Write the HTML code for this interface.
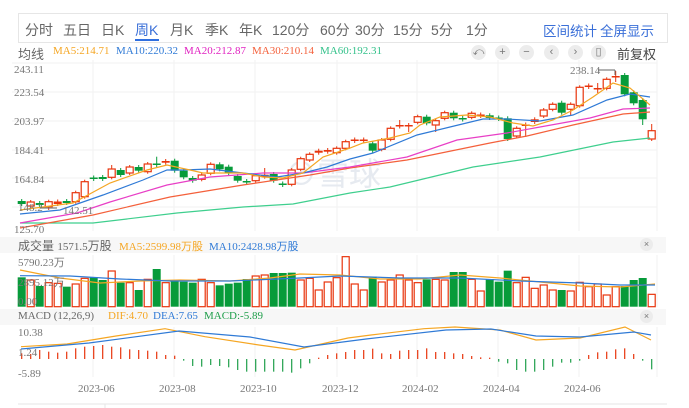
<!DOCTYPE html><html><head><meta charset="utf-8"><style>
body{margin:0;background:#fff;width:689px;height:408px;overflow:hidden;font-family:"Liberation Sans","Noto Sans CJK SC",sans-serif;position:relative}
.a{position:absolute;white-space:nowrap}
.tab{position:absolute;top:20px;font-size:14px;color:#666}
.s{font-family:"Liberation Serif","Noto Sans CJK SC",serif}
.ic{position:absolute;top:45px;width:15px;height:15px;border-radius:50%;background:#ececec;color:#777;font-size:11px;text-align:center;line-height:15px}
</style></head><body>
<div class="a" style="left:18px;top:13px;width:648px;height:28px;border:1px solid #e6e6e6"></div>
<div class="tab" style="left:25px">分时</div><div class="tab" style="left:63px">五日</div><div class="tab" style="left:101px">日K</div>
<div class="tab" style="left:135px;color:#3a6fd8">周K</div><div class="a" style="left:135px;top:39px;width:24px;height:2px;background:#2f6fe0"></div>
<div class="tab" style="left:170px">月K</div><div class="tab" style="left:205px">季K</div><div class="tab" style="left:239px">年K</div>
<div class="tab" style="left:272px">120分</div><div class="tab" style="left:320px">60分</div><div class="tab" style="left:355px">30分</div>
<div class="tab" style="left:393px">15分</div><div class="tab" style="left:431px">5分</div><div class="tab" style="left:466px">1分</div>
<div class="tab" style="left:543px;color:#3a6fd8;font-size:13.5px">区间统计</div><div class="tab" style="left:600px;color:#3a6fd8;font-size:13.5px">全屏显示</div>
<div class="a" style="left:18px;top:44px;font-size:13px;color:#666">均线</div>
<div class="a s" style="left:53px;top:45px;font-size:11px;color:#f5a623">MA5:214.71</div>
<div class="a s" style="left:116px;top:45px;font-size:11px;color:#2f7ad6">MA10:220.32</div>
<div class="a s" style="left:184px;top:45px;font-size:11px;color:#e020c0">MA20:212.87</div>
<div class="a s" style="left:252px;top:45px;font-size:11px;color:#f4603b">MA30:210.14</div>
<div class="a s" style="left:320px;top:45px;font-size:11px;color:#33c18a">MA60:192.31</div>
<div class="ic" style="left:471px">⤺</div><div class="ic" style="left:495px">+</div><div class="ic" style="left:519px">−</div><div class="ic" style="left:544px">‹</div><div class="ic" style="left:568px">›</div><div class="ic" style="left:591px">▯</div>
<div class="a" style="left:617px;top:44px;font-size:13px;color:#444">前复权</div>
<div class="a" style="left:0;top:237px;width:666px;height:16px;background:#f7f7f7"></div>
<div class="a" style="left:18px;top:237px;font-size:12px;color:#666">成交量 <span class="s" style="font-size:11px">1571.5</span>万股</div>
<div class="a s" style="left:119px;top:238px;font-size:11px;color:#f5a623">MA5:2599.98<span style="font-family:'Noto Sans CJK SC'">万股</span></div>
<div class="a s" style="left:209px;top:238px;font-size:11px;color:#2f7ad6">MA10:2428.98<span style="font-family:'Noto Sans CJK SC'">万股</span></div>
<div class="a" style="left:0;top:309px;width:666px;height:16px;background:#f7f7f7"></div>
<div class="a s" style="left:18px;top:310px;font-size:11px;color:#666">MACD (12,26,9)</div>
<div class="a s" style="left:108px;top:310px;font-size:11px;color:#f5a623">DIF:4.70</div>
<div class="a s" style="left:153px;top:310px;font-size:11px;color:#2f7ad6">DEA:7.65</div>
<div class="a s" style="left:204px;top:310px;font-size:11px;color:#1e9e4a">MACD:-5.89</div>
<div class="ic" style="left:640px;top:238px;width:13px;height:13px;line-height:13px;font-size:9px">×</div>
<div class="ic" style="left:640px;top:310px;width:13px;height:13px;line-height:13px;font-size:9px">×</div>
<svg id="g" class="a" style="left:0;top:0" width="689" height="408"></svg>
<script>
var S='',R='#e8340c',G='#079b3a';
function L(x1,y1,x2,y2,c,w){S+='<line x1="'+x1+'" y1="'+y1+'" x2="'+x2+'" y2="'+y2+'" stroke="'+c+'" stroke-width="'+(w||1)+'"/>';}
function P(p,c,w){S+='<polyline fill="none" stroke="'+c+'" stroke-width="'+(w||1.2)+'" points="'+p+'"/>';}
function T(x,y,t,s,c){S+='<text x="'+x+'" y="'+y+'" font-size="'+(s||11)+'" fill="'+(c||'#777')+'" font-family="Liberation Serif,serif">'+t+'</text>';}
[63,92,121,150,178,207].forEach(function(y){L(12,y,657,y,'#f0f0f0')});
[93,174,255,337,417,498,579,657].forEach(function(x){L(x,60,x,231,'#f2f2f2');L(x,255,x,307,'#f2f2f2');L(x,327,x,377,'#f2f2f2')});
S+='<text x="285" y="185" font-size="32" fill="#e6eaf0" font-family="Noto Sans CJK SC">⊘雪球</text>';
var C=[[201,204,G],[202,206,R],[203,205,G],[201.7,206.7,R,0,210],[201.5,204,R],[201,203,G],[192.7,201.7,R],[181.7,196.7,R],[177.5,179,G],[177,179,G],[169,177.3,R,165],[170,175,G],[167,173,R],[167,170.7,G],[164,171.7,R],[163.5,165,G,156.7],[161,162.7,R],[160.7,170.7,G],[170.7,177.3,G],[178,180.7,G],[175,179.3,R],[164.3,173.3,R],[164.3,169.3,G],[166.7,173.3,G],[176,180.7,G],[181,182.5,G],[175.7,180.7,R],[174.7,176.7,R,168],[174,180.7,G],[183.5,185,G],[170,184.3,R],[158.7,169.3,R],[154.3,160,R],[150.7,152.7,R],[150,151.7,R],[148.3,152.7,R],[141.7,148.3,R],[139.5,141,R],[139.5,141,R],[143.3,150.7,G],[140,149.3,R],[128.3,139.3,R],[125,126.5,R,120],[125,126.5,R,0,132],[116.7,122.3,R],[116.7,123.3,G],[120.7,125,R,0,132],[112.7,118.3,R],[112.7,118.3,G],[118,119.5,G],[113.3,117.3,R],[114.5,116,R],[115.3,118,G],[117.5,119,G],[118.3,139,G],[128.3,136,R],[124.5,126,R,0,137],[119.3,122,R],[110,116,R],[104.3,109.3,R],[102.7,112.7,G],[104.3,109.3,R,0,115],[87.3,105.7,R],[85.5,87,R],[88,89.5,R,83,93],[79.3,88.3,R],[76,77.5,R,71,82],[75,94.3,G],[92.3,103.3,G],[100,119.3,G,0,125],[130.7,139,R,124,141]];
C.forEach(function(c,i){var x=21.7+9*i,t=c[0],b=c[1],col=c[2];var wt=c[3]||t-2,wb=c[4]||b+2;L(x,wt,x,wb,col);
if(col==R&&b-t>3)S+='<rect x="'+(x-3.5)+'" y="'+t+'" width="7" height="'+(b-t)+'" fill="#fff" stroke="'+R+'" stroke-width="1.2"/>';
else S+='<rect x="'+(x-4)+'" y="'+t+'" width="8" height="'+Math.max(b-t,1.5)+'" fill="'+col+'"/>';});
P('20,223 93,223 177,213 243,207 293,204 350,193 390,187 473,167 540,157 613,142 650,138','#3fcf8e');
P('20,228 93,215 170,197 243,185 310,175 350,168 407,160 490,143 527,136 573,125 623,114 650,112','#f4603b');
P('20,223 77,213 110,202 167,185 210,177 263,173 303,173 350,167 407,157 457,140 507,133 540,127 590,118 623,109 650,108','#e83fc6');
P('20,214 60,210 103,195 143,180 167,170 183,170 210,169 243,173 277,177 303,173 327,167 350,159 373,153 417,135 450,127 483,119 507,119 540,121 573,115 607,100 630,94 650,97','#2f7ad6');
P('20,210 73,203 110,183 147,170 167,165 190,170 203,173 243,173 263,177 283,178 303,173 323,157 350,148 363,143 390,138 410,133 420,125 440,117 467,115 490,117 513,123 533,126 553,120 573,110 593,97 613,83 630,88 650,105','#f5a623');
T(14,73,'243.11');T(14,96,'223.54');T(14,125,'203.97');T(14,154,'184.41');T(14,183,'164.84');T(14,233,'125.70');T(18,211,'148.2');
L(40,208,57,208,'#666');T(63,214,'142.51',11,'#777');T(570,74,'238.14',11,'#777');L(598,70,615,70,'#666');L(615,70,615,75,'#666');
var V=[142,150,168,158,160,170,162,145,141,150,123,158,158,180,148,117,158,152,155,158,148,158,166,161,158,147,138,135,129,129,128,150,145,180,156,143,80,162,180,140,156,150,135,150,158,148,148,150,126,126,148,183,147,155,122,158,142,175,165,180,180,183,157,170,162,195,170,168,150,144,193];
var VC='GRGRRGRRGGRGRGRGRGGGRRGGGGRRGGGRRRRRRRRGRRRRRGRRGGRRGGGRRRRRGRRRRRRGGGR';
V.forEach(function(v,i){var x=21.7+9*i,t=v/3+230,h=306.7-t,c=VC[i]=='G'?G:R;
if(c==R)S+='<rect x="'+(x-3.5)+'" y="'+t+'" width="7" height="'+h+'" fill="#fff" stroke="'+R+'" stroke-width="1.2"/>';else S+='<rect x="'+(x-4)+'" y="'+t+'" width="8" height="'+h+'" fill="'+G+'"/>';});
P('20,270 60,278 100,283 140,281 180,280 230,281 270,278 300,274 340,275 380,279 420,279 460,275 500,278 540,282 580,286 620,287 655,284','#f5a623');
P('20,275.7 70,276 120,279 170,281 230,281 300,278 340,276 400,278 460,278 520,281 580,283 620,285 655,285','#2f7ad6');
T(18,266,'5790.23<tspan font-family="Noto Sans CJK SC">万</tspan>');T(18,286,'2895.12<tspan font-family="Noto Sans CJK SC">万</tspan>');T(18,305,'0.00');
var M=[370,372,360,365,368,365,355,350,348,345,350,352,358,360,362,365,375,377,392,408,410,405,408,412,420,425,425,425,425,425,428,415,400,383,375,370,366,360,360,356,370,372,362,360,360,355,366,366,370,372,378,382,383,395,400,420,425,425,420,410,398,398,392,375,367,365,358,355,372,392,418,445];
M=M.slice(0,71);M.forEach(function(m,i){var x=21.7+9*i,y=m/3+230;L(x,359,x,y,y<359?R:'#1e9e4a',1.2)});
P('21,346.7 67,344 116,336 165,328.7 205,336.7 259,345 295,350 348,338 371,335 424,328.7 455,327 500,330 536,340 580,338 625,327 651,340','#f5a623');
P('21,349 89,343 179,331 250,337 304,347 366,339 446,330 491,329 536,336 580,337 634,332 651,335','#2f7ad6');
T(18,336,'10.38');T(18,356,'1.24');T(18,377,'-5.89');
['2023-06','2023-08','2023-10','2023-12','2024-02','2024-04','2024-06'].forEach(function(d,i){T([78,159,240,322,402,483,564][i],392,d,11,'#777')});
L(18,404,667,404,'#e6e6e6');L(105,404,105,408,'#e6e6e6');
document.getElementById('g').innerHTML=S;
</script>
</body></html>
